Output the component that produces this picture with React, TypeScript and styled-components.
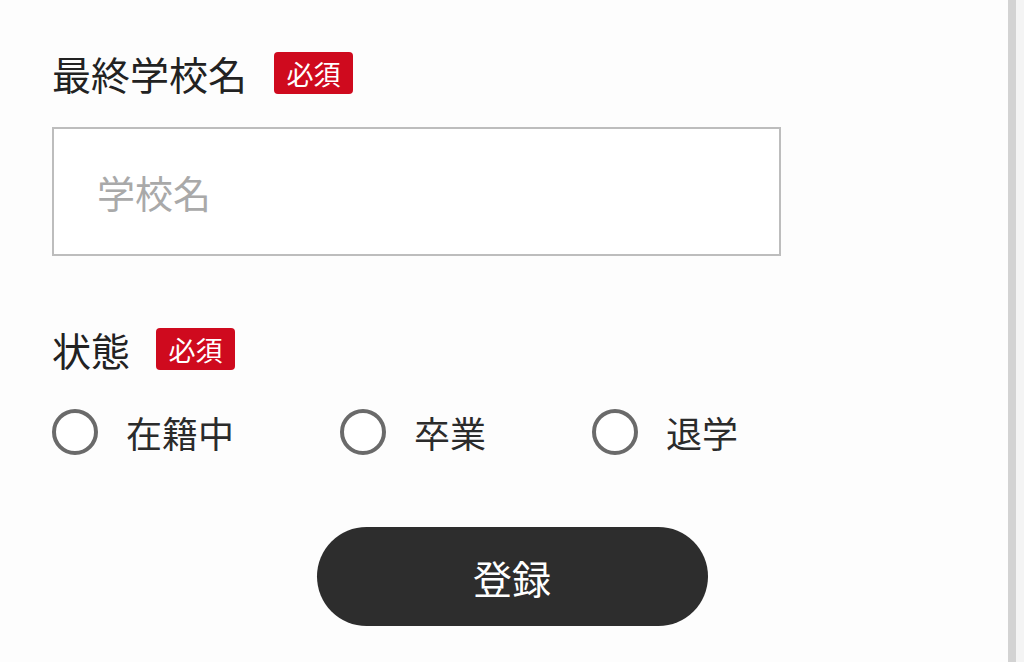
import styled, { createGlobalStyle } from "styled-components"

const GlobalStyle = createGlobalStyle`
  html, body {
    margin: 0;
    padding: 0;
    background: #fdfdfd;
  }
  body {
    font-family: "Noto Sans CJK JP", "Noto Sans", sans-serif;
    color: #222;
  }
`

const Page = styled.div`
  width: 1024px;
  height: 662px;
  overflow: hidden;
`

const Form = styled.form`
  display: flex;
  flex-direction: column;
  padding: 51px 0 0 52px;
`

const LabelRow = styled.div<{ $gap: number; $top?: number }>`
  display: flex;
  align-items: center;
  gap: ${p => p.$gap}px;
  height: 44px;
  margin-top: ${p => p.$top || 0}px;
`

const Label = styled.span`
  font-size: 39px;
  line-height: 1;
  color: #222;
`

const Required = styled.span`
  display: inline-flex;
  align-items: center;
  justify-content: center;
  width: 79px;
  height: 42px;
  border-radius: 4px;
  background: #cf0a1e;
  color: #fff;
  font-size: 27px;
  line-height: 1;
`

const TextInput = styled.input`
  box-sizing: border-box;
  width: 729px;
  height: 129px;
  margin-top: 32px;
  padding: 0 0 0 43px;
  border: 2px solid #bdbdbd;
  border-radius: 0;
  background: #fff;
  font-family: inherit;
  font-size: 38px;
  color: #222;
  outline: none;

  &::placeholder {
    color: #a9a9a9;
  }
`

const RadioGroup = styled.div`
  display: flex;
  align-items: center;
  gap: 106px;
  margin-top: 38px;
`

const RadioItem = styled.label`
  display: flex;
  align-items: center;
  gap: 28px;
  cursor: pointer;
`

const Circle = styled.span`
  box-sizing: border-box;
  width: 46px;
  height: 46px;
  border-radius: 50%;
  border: 4px solid #6a6a6a;
  background: #fff;
`

const RadioText = styled.span`
  font-size: 36px;
  line-height: 1;
  color: #2b2b2b;
`

const ButtonRow = styled.div`
  display: flex;
  justify-content: center;
  width: 1024px;
  margin: 72px 0 0 -52px;
`

const Submit = styled.button`
  width: 391px;
  height: 99px;
  border: none;
  border-radius: 50px;
  background: #2d2d2d;
  color: #fff;
  font-family: inherit;
  font-size: 39px;
  cursor: pointer;
`

const ScrollTrack = styled.div`
  position: fixed;
  top: 0;
  right: 0;
  width: 16px;
  height: 662px;
  display: flex;
  background: #f4f4f4;
`

const ScrollThumb = styled.div`
  width: 8px;
  height: 100%;
  background: #d3d3d3;
`

const statuses = ["在籍中", "卒業", "退学"]

export default function App() {
  return (
    <Page>
      <GlobalStyle />
      <Form onSubmit={e => e.preventDefault()}>
        <LabelRow $gap={27}>
          <Label>最終学校名</Label>
          <Required>必須</Required>
        </LabelRow>
        <TextInput placeholder="学校名" />

        <LabelRow $gap={26} $top={71}>
          <Label>状態</Label>
          <Required>必須</Required>
        </LabelRow>
        <RadioGroup>
          {statuses.map(s => (
            <RadioItem key={s}>
              <Circle />
              <RadioText>{s}</RadioText>
            </RadioItem>
          ))}
        </RadioGroup>

        <ButtonRow>
          <Submit type="submit">登録</Submit>
        </ButtonRow>
      </Form>
      <ScrollTrack>
        <ScrollThumb />
      </ScrollTrack>
    </Page>
  )
}
